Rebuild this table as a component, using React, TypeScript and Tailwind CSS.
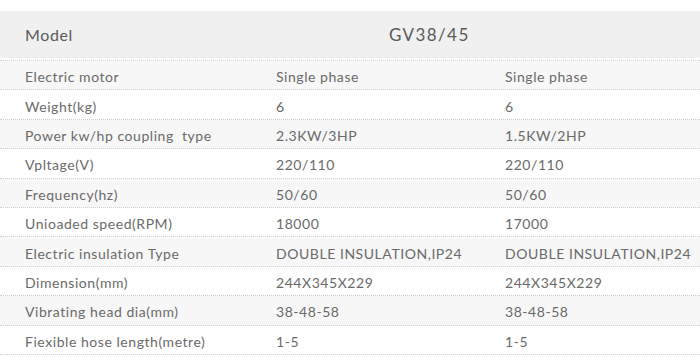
import React from 'react';

const rows: [string, string, string][] = [
  ['Electric motor', 'Single phase', 'Single phase'],
  ['Weight(kg)', '6', '6'],
  ['Power kw/hp coupling  type', '2.3KW/3HP', '1.5KW/2HP'],
  ['Vpltage(V)', '220/110', '220/110'],
  ['Frequency(hz)', '50/60', '50/60'],
  ['Unioaded speed(RPM)', '18000', '17000'],
  ['Electric insulation Type', 'DOUBLE INSULATION,IP24', 'DOUBLE INSULATION,IP24'],
  ['Dimension(mm)', '244X345X229', '244X345X229'],
  ['Vibrating head dia(mm)', '38-48-58', '38-48-58'],
  ['Fiexible hose length(metre)', '1-5', '1-5'],
];

const App = () => {
  return (
    <div className="w-[700px] h-[356px] overflow-hidden bg-white pt-[11px] text-[#6a6a6a] font-['Lato',sans-serif]">
      <div className="flex items-center h-[47px] bg-[#f0f0f0] text-[16px] text-[#5a5a5a] tracking-[0.6px]">
        <div className="pl-[25px] w-[389px]">Model</div>
        <div className="text-[17px] tracking-[1.4px]">GV38/45</div>
      </div>
      <div className="mt-[2px] border-t border-dotted border-[#cfcfcf]">
        {rows.map(([label, a, b], i) => (
          <div
            key={label}
            className={`flex items-center h-[29.4px] pt-[3px] border-b border-dotted border-[#cfcfcf] text-[14px] tracking-[0.55px] whitespace-pre ${i % 2 === 0 ? 'bg-[#f7f7f7]' : 'bg-white'}`}
          >
            <div className="pl-[25px] w-[276px] shrink-0">{label}</div>
            <div className="w-[229px] shrink-0">{a}</div>
            <div className="whitespace-nowrap">{b}</div>
          </div>
        ))}
      </div>
    </div>
  );
};

export default App;
